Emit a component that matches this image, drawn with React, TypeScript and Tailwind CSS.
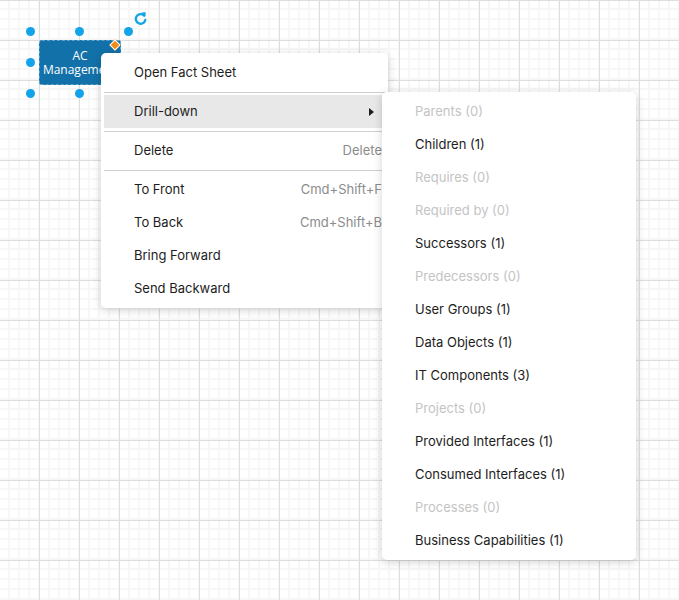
type Item = { label: string; shortcut?: string; active?: boolean; sub?: boolean };

const groups: Item[][] = [
  [{ label: "Open Fact Sheet" }],
  [{ label: "Drill-down", active: true, sub: true }],
  [{ label: "Delete", shortcut: "Delete" }],
  [
    { label: "To Front", shortcut: "Cmd+Shift+F" },
    { label: "To Back", shortcut: "Cmd+Shift+B" },
    { label: "Bring Forward" },
    { label: "Send Backward" },
  ],
];

const drill = [
  { label: "Parents (0)", disabled: true },
  { label: "Children (1)" },
  { label: "Requires (0)", disabled: true },
  { label: "Required by (0)", disabled: true },
  { label: "Successors (1)" },
  { label: "Predecessors (0)", disabled: true },
  { label: "User Groups (1)" },
  { label: "Data Objects (1)" },
  { label: "IT Components (3)" },
  { label: "Projects (0)", disabled: true },
  { label: "Provided Interfaces (1)" },
  { label: "Consumed Interfaces (1)" },
  { label: "Processes (0)", disabled: true },
  { label: "Business Capabilities (1)" },
];

function Handle({ className }: { className: string }) {
  return <span className={`absolute h-[9px] w-[9px] rounded-full bg-[#12a3e8] ${className}`} />;
}

export default function App() {
  return (
    <div className="relative h-[600px] w-[679px] overflow-hidden bg-white font-['Inter','Liberation_Sans',sans-serif] bg-[linear-gradient(#dedede_1px,transparent_1px),linear-gradient(90deg,#dedede_1px,transparent_1px),linear-gradient(#f7f7f7_2px,transparent_2px),linear-gradient(90deg,#f7f7f7_2px,transparent_2px)] [background-size:40px_40px,40px_40px,10px_10px,10px_10px] [background-position:0_0,39px_0,0_8px,8px_0]">
      {/* selected node */}
      <div className="absolute left-[39px] top-[40px] flex h-[45px] w-[82px] flex-col items-center justify-center rounded-[3px] border border-dashed border-[#5fa3cb] bg-[#1271a8] font-['Open_Sans',sans-serif] text-[12px] leading-[14px] text-white">
        <span>AC</span>
        <span className="whitespace-nowrap">Management</span>
      </div>
      <span className="absolute left-[111px] top-[41px] h-[8px] w-[8px] rotate-45 border border-white bg-[#f08c1a]" />
      <Handle className="left-[26px] top-[27px]" />
      <Handle className="left-[75px] top-[27px]" />
      <Handle className="left-[124px] top-[27px]" />
      <Handle className="left-[26px] top-[58px]" />
      <Handle className="left-[26px] top-[89px]" />
      <Handle className="left-[75px] top-[89px]" />
      <svg className="absolute left-[133px] top-[11px]" width="15" height="15" viewBox="0 0 14 14" fill="none">
        <path d="M10.4 4.3A4.5 4.5 0 1 0 11.5 8.4" stroke="#12a3e8" strokeWidth="2.2" strokeLinecap="round" />
        <path d="M7.8 1.4 L12 1.2 L11.4 5.6 Z" fill="#12a3e8" />
      </svg>

      {/* context menu */}
      <div className="absolute left-[101px] top-[53px] w-[287px] rounded-[5px] bg-white p-[3px] text-[13px] text-[#1d1d1d] shadow-[0_2px_10px_rgba(0,0,0,0.18)]">
        {groups.map((g, gi) => (
          <div key={gi}>
            {gi > 0 && <div className="mt-[3px] mb-[2px] h-px bg-[#cfcfcf]" />}
            {g.map((it) => (
              <div
                key={it.label}
                className={`flex h-[33px] items-center justify-between pl-[30px] pr-[3px] ${it.active ? "bg-[#e8e8e8]" : ""}`}
              >
                <span>{it.label}</span>
                {it.shortcut && <span className="text-[#8c8c8c]">{it.shortcut}</span>}
                {it.sub && (
                  <svg width="5" height="8" viewBox="0 0 5 8" className="mr-[8px]">
                    <path d="M0 0 L5 4 L0 8 Z" fill="#1d1d1d" />
                  </svg>
                )}
              </div>
            ))}
          </div>
        ))}
      </div>

      {/* drill-down submenu */}
      <div className="absolute left-[382px] top-[92px] w-[254px] rounded-[5px] bg-white py-[3px] text-[13px] shadow-[0_2px_10px_rgba(0,0,0,0.18)]">
        {drill.map((d) => (
          <div
            key={d.label}
            className={`flex h-[33px] items-center pl-[33px] ${d.disabled ? "text-[#c4c4c4]" : "text-[#1d1d1d]"}`}
          >
            {d.label}
          </div>
        ))}
      </div>
    </div>
  );
}
